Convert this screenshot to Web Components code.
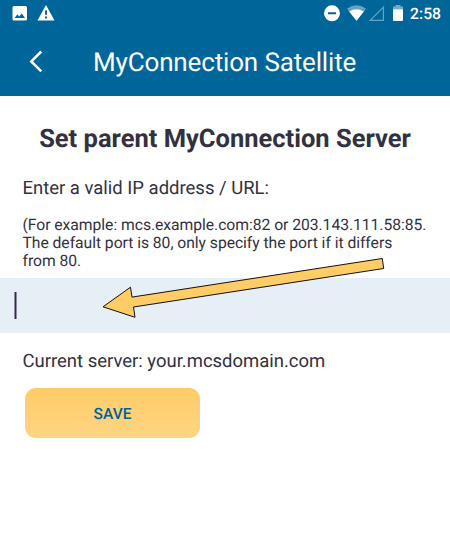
<!DOCTYPE html>
<html lang="en">
<head>
<meta charset="utf-8">
<title>MyConnection Satellite</title>
<style>
  body {
    margin: 0;
    background: #fff;
    color: #33313f;
    font-family: Roboto, "Liberation Sans", sans-serif;
    text-rendering: geometricPrecision;
  }
</style>
</head>
<body>
<server-page>
  <status-bar slot="top" time="2:58"></status-bar>
  <title-bar slot="top">MyConnection Satellite</title-bar>
  <server-form server="your.mcsdomain.com">
    <span slot="heading">Set parent MyConnection Server</span>
    <span slot="label">Enter a valid IP address / URL:</span>
    <span slot="hint">(For example: mcs.example.com:82 or 203.143.111.58:85.<br>The default port is 80, only specify the port if it differs<br>from 80.</span>
    <address-field slot="field"></address-field>
    <save-button slot="action">SAVE</save-button>
  </server-form>
  <pointer-arrow slot="overlay"></pointer-arrow>
</server-page>

<script>
class ServerPage extends HTMLElement {
  constructor() {
    super();
    this.attachShadow({ mode: 'open' });
  }

  connectedCallback() {
    this.shadowRoot.innerHTML = `
      <style>
        :host {
          display: block;
          position: relative;
          height: 542px;
          overflow: hidden;
        }
        header {
          background: #006699;
          color: #fff;
        }
      </style>
      <header><slot name="top"></slot></header>
      <slot></slot>
      <slot name="overlay"></slot>
    `;
  }
}

class StatusBar extends HTMLElement {
  constructor() {
    super();
    this.attachShadow({ mode: 'open' });
  }

  connectedCallback() {
    this.shadowRoot.innerHTML = `
      <style>
        :host {
          display: flex;
          justify-content: space-between;
          align-items: center;
          height: 28px;
          padding: 0 9px 0 12px;
        }
        div {
          display: flex;
          align-items: center;
        }
        svg { display: block; }
        time {
          width: 33px;
          text-align: right;
          font-size: 15.700px;
          font-weight: 500;
          line-height: 20px;
        }
      </style>
      <div>
        <svg width="44" height="20" viewBox="12 4 44 20">
          <path fill="#fff" fill-rule="evenodd" d="M14 6h11.500q1.500 0 1.500 1.500v11.500q0 1.500-1.500 1.500h-11.500q-1.500 0-1.500-1.500V7.500q0-1.500 1.500-1.500zM14.600 18h10.500l-3.400-4.600-2.500 3-1.800-2.100z"/>
          <path fill="#fff" fill-rule="evenodd" d="M46 5l8.500 15.500h-17zM45 10.500v4.300h2v-4.300zM45 16.600v2h2v-2z"/>
        </svg>
      </div>
      <div>
        <svg width="86" height="24" viewBox="322 2 86 24">
          <path fill="#fff" fill-rule="evenodd" d="M332 5.300a8 8 0 1 0 0 16 8 8 0 0 0 0-16zM328 12.300h8v2h-8z"/>
          <path fill="#fff" fill-opacity=".4" d="M347 8.700q9.500-6.800 19 0L356.500 20.800z"/>
          <path fill="#fff" d="M349.200 11.500q7.300-4.700 14.600 0L356.500 20.800z"/>
          <path fill="none" stroke="#fff" stroke-opacity=".4" stroke-width="1.200" d="M370.200 20.300H383.400V7.100z"/>
          <path fill="#fff" fill-opacity=".45" d="M395.500 5h5v1.500h2.500V9.500h-10V6.500h2.500z"/>
          <path fill="#fff" d="M393 9.300h10V20q0 1-1 1h-8q-1 0-1-1z"/>
        </svg>
        <time>${this.getAttribute('time')}</time>
      </div>
    `;
  }
}

class TitleBar extends HTMLElement {
  constructor() {
    super();
    this.attachShadow({ mode: 'open' });
  }

  connectedCallback() {
    this.shadowRoot.innerHTML = `
      <style>
        :host {
          display: flex;
          align-items: center;
          gap: 49px;
          height: 68px;
          padding-left: 28px;
        }
        h1 {
          margin: 0;
          padding-top: 2px;
          font-size: 26px;
          font-weight: 400;
          line-height: 32px;
          letter-spacing: -0.150px;
          white-space: nowrap;
        }
      </style>
      <svg width="16" height="24" viewBox="28 50 16 24">
        <path fill="none" stroke="#fff" stroke-width="2.600" d="M41.300 51.500L31.300 61.400l10 9.900"/>
      </svg>
      <h1><slot></slot></h1>
    `;
  }
}

class ServerForm extends HTMLElement {
  constructor() {
    super();
    this.attachShadow({ mode: 'open' });
  }

  connectedCallback() {
    this.shadowRoot.innerHTML = `
      <style>
        :host {
          display: block;
          padding-top: 26px;
        }
        h2, p {
          margin: 0;
          white-space: nowrap;
        }
        h2 {
          text-align: center;
          font-size: 25.500px;
          font-weight: 700;
          line-height: 34px;
        }
        p {
          padding-left: 22.500px;
          font-size: 18.480px;
          line-height: 24px;
        }
        .label { margin-top: 20px; }
        .hint {
          margin: 16px 0 8px;
          font-size: 15.700px;
          letter-spacing: -0.040px;
          line-height: 18px;
        }
        .current { margin: 16px 0 15px; }
      </style>
      <h2><slot name="heading"></slot></h2>
      <p class="label"><slot name="label"></slot></p>
      <p class="hint"><slot name="hint"></slot></p>
      <slot name="field"></slot>
      <p class="current">Current server: ${this.getAttribute('server')}</p>
      <slot name="action"></slot>
    `;
  }
}

class AddressField extends HTMLElement {
  constructor() {
    super();
    this.attachShadow({ mode: 'open' });
  }

  connectedCallback() {
    this.shadowRoot.innerHTML = `
      <style>
        :host {
          display: flex;
          align-items: center;
          height: 55px;
          padding-left: 14px;
          background: #e6eff5;
        }
        .caret {
          width: 1px;
          height: 27px;
          border: solid #8e8a9f;
          border-width: 0 1px;
          background: #33294a;
        }
      </style>
      <span class="caret"></span>
    `;
  }
}

class SaveButton extends HTMLElement {
  constructor() {
    super();
    this.attachShadow({ mode: 'open' });
  }

  connectedCallback() {
    this.shadowRoot.innerHTML = `
      <style>
        :host {
          display: block;
          padding-left: 25px;
        }
        button {
          display: block;
          width: 175px;
          height: 50px;
          padding: 2px 0 0;
          border: 0;
          border-radius: 11px;
          background: linear-gradient(#ffcb66, #ffd583);
          color: #006099;
          font: 500 15.500px/20px Roboto, "Liberation Sans", sans-serif;
          text-rendering: geometricPrecision;
        }
      </style>
      <button type="button"><slot></slot></button>
    `;
  }
}

class PointerArrow extends HTMLElement {
  constructor() {
    super();
    this.attachShadow({ mode: 'open' });
  }

  connectedCallback() {
    this.shadowRoot.innerHTML = `
      <style>
        :host {
          position: absolute;
          left: 100px;
          top: 254px;
          pointer-events: none;
        }
        svg { display: block; }
      </style>
      <svg width="288" height="68" viewBox="100 254 288 68">
        <path fill="#ffcc66" stroke="#111" d="M103 306.800L130.500 287.200L132 297.100L382.300 258.500L383.700 268.500L133.500 307L135 317.300z"/>
      </svg>
    `;
  }
}

customElements.define('server-page', ServerPage);
customElements.define('status-bar', StatusBar);
customElements.define('title-bar', TitleBar);
customElements.define('server-form', ServerForm);
customElements.define('address-field', AddressField);
customElements.define('save-button', SaveButton);
customElements.define('pointer-arrow', PointerArrow);
</script>
</body>
</html>
